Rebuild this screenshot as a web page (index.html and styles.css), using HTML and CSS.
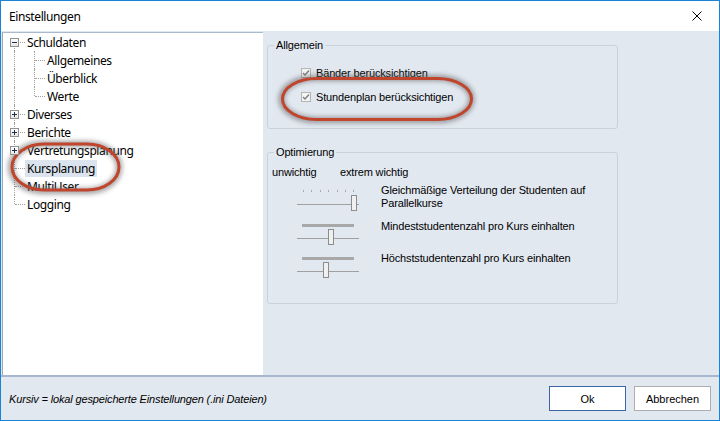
FILE: index.html
```html
<!DOCTYPE html>
<html lang="de">
<head>
  <meta charset="UTF-8">
  <title>Einstellungen</title>
  <link rel="stylesheet" href="styles.css">
</head>
<body>
  <div class="window">
    <!-- Titelleiste -->
    <div class="titlebar">
      <span class="title">Einstellungen</span>
      <svg class="close" width="10" height="10" viewBox="0 0 10 10">
        <path d="M0.5 0.5 L9.5 9.5 M9.5 0.5 L0.5 9.5" stroke="#000" stroke-width="1" fill="none"/>
      </svg>
    </div>

    <div class="main">
      <!-- Baum links -->
      <div class="tree">
        <div class="row"><span class="branch first"><span class="expander minus"></span></span><span class="label">Schuldaten</span></div>
        <div class="row"><span class="branch pipe"></span><span class="branch tee"></span><span class="label">Allgemeines</span></div>
        <div class="row"><span class="branch pipe"></span><span class="branch tee"></span><span class="label">Überblick</span></div>
        <div class="row"><span class="branch pipe"></span><span class="branch elbow"></span><span class="label">Werte</span></div>
        <div class="row"><span class="branch tee"><span class="expander plus"></span></span><span class="label">Diverses</span></div>
        <div class="row"><span class="branch tee"><span class="expander plus"></span></span><span class="label">Berichte</span></div>
        <div class="row"><span class="branch tee"><span class="expander plus"></span></span><span class="label">Vertretungsplanung</span></div>
        <div class="row"><span class="branch tee"></span><span class="label selected">Kursplanung</span></div>
        <div class="row"><span class="branch tee"></span><span class="label">MultiUser</span></div>
        <div class="row"><span class="branch elbow"></span><span class="label">Logging</span></div>
      </div>

      <!-- Einstellungen rechts -->
      <div class="settings">
        <fieldset class="group group-general">
          <legend>Allgemein</legend>
          <label class="check first-check">
            <svg width="10" height="10" viewBox="0 0 10 10"><rect x="0.5" y="0.5" width="9" height="9" fill="#f4f4f4" stroke="#b4b4b4"/><path d="M2 5 L4 7 L8 2.5" stroke="#808080" stroke-width="1.4" fill="none"/></svg>
            Bänder berücksichtigen
          </label>
          <label class="check">
            <svg width="10" height="10" viewBox="0 0 10 10"><rect x="0.5" y="0.5" width="9" height="9" fill="#f4f4f4" stroke="#b4b4b4"/><path d="M2 5 L4 7 L8 2.5" stroke="#808080" stroke-width="1.4" fill="none"/></svg>
            Stundenplan berücksichtigen
          </label>
        </fieldset>

        <fieldset class="group group-opt">
          <legend>Optimierung</legend>
          <div class="scale"><span class="scale-lo">unwichtig</span><span>extrem wichtig</span></div>

          <div class="slider-row tall">
            <svg class="slider" width="64" height="24" viewBox="0 0 64 24">
              <path d="M6.5 2 V4 M14.5 2 V4 M23.5 2 V4 M31.5 2 V4 M40.5 2 V4 M48.5 2 V4 M56.5 2 V4" stroke="#a8a8a8"/>
              <path d="M0 16.5 H62" stroke="#a0a0a0"/>
              <rect x="54.5" y="7.5" width="5" height="15" fill="#f0f0f0" stroke="#8c8c8c"/>
            </svg>
            <span class="slider-label">Gleichmäßige Verteilung der Studenten auf<br>Parallelkurse</span>
          </div>

          <div class="slider-row">
            <svg class="slider" width="64" height="24" viewBox="0 0 64 24">
              <rect x="5" y="0" width="52" height="3" fill="#a8a8a8"/>
              <path d="M0 14.5 H62" stroke="#a0a0a0"/>
              <rect x="31.5" y="5.5" width="5" height="15" fill="#f0f0f0" stroke="#8c8c8c"/>
            </svg>
            <span class="slider-label">Mindeststudentenzahl pro Kurs einhalten</span>
          </div>

          <div class="slider-row">
            <svg class="slider" width="64" height="24" viewBox="0 0 64 24">
              <rect x="5" y="1" width="52" height="3" fill="#a8a8a8"/>
              <path d="M0 15.5 H62" stroke="#a0a0a0"/>
              <rect x="26.5" y="6.5" width="5" height="15" fill="#f0f0f0" stroke="#8c8c8c"/>
            </svg>
            <span class="slider-label">Höchststudentenzahl pro Kurs einhalten</span>
          </div>
        </fieldset>
      </div>
    </div>

    <!-- Fußleiste -->
    <div class="footer">
      <span class="hint">Kursiv = lokal gespeicherte Einstellungen (.ini Dateien)</span>
      <div class="buttons">
        <button class="btn btn-default">Ok</button>
        <button class="btn">Abbrechen</button>
      </div>
    </div>

    <!-- rote Markierungen über dem Screenshot -->
    <svg class="marks" width="720" height="421" viewBox="0 0 720 421">
      <defs>
        <filter id="soft" x="-20%" y="-40%" width="140%" height="180%">
          <feGaussianBlur stdDeviation="2.4"/>
        </filter>
      </defs>
      <rect x="281.5" y="78" width="190" height="42" rx="34" ry="21" fill="none" stroke="#5e5e5e" stroke-width="6" opacity="0.6" filter="url(#soft)"/>
      <rect x="282.5" y="78.5" width="189" height="41" rx="34" ry="20.5" fill="none" stroke="#c0452c" stroke-width="3"/>
      <rect x="11" y="144" width="108" height="47" rx="32" ry="23" fill="none" stroke="#5e5e5e" stroke-width="6" opacity="0.6" filter="url(#soft)"/>
      <rect x="12" y="144" width="107" height="46" rx="32" ry="23" fill="none" stroke="#c0452c" stroke-width="3"/>
    </svg>
  </div>
</body>
</html>
```

FILE: styles.css
```css
html, body {
  margin: 0;
  padding: 0;
  background: #ffffff;
}

.window {
  position: relative;
  width: 720px;
  height: 421px;
  box-sizing: border-box;
  border: 1px solid #1883d7;
  background: #e2e8f0;
  display: flex;
  flex-direction: column;
  overflow: hidden;
  font-family: "Liberation Sans", Arial, sans-serif;
  font-size: 11px;
  letter-spacing: -0.15px;
  color: #000000;
}

/* Titelleiste */
.titlebar {
  height: 30px;
  flex: none;
  background: #ffffff;
  display: flex;
  align-items: center;
  justify-content: space-between;
  padding: 0 17px 0 8px;
}
.title {
  font-family: "Noto Sans", "Open Sans", sans-serif;
  font-size: 12px;
  letter-spacing: -0.4px;
}

.main {
  height: 344px;
  flex: none;
  display: flex;
}

/* Baum */
.tree {
  width: 259px;
  margin: 1px 0 0 1px;
  background: #ffffff;
  border-top: 1px solid #abb9cd;
  border-left: 1px solid #a3a8ae;
  padding-left: 1px;
  font-family: "Noto Sans", "Open Sans", sans-serif;
  font-size: 12px;
  letter-spacing: -0.4px;
}
.row {
  display: flex;
  align-items: center;
  height: 18px;
}
.branch {
  position: relative;
  width: 20px;
  height: 18px;
  flex: none;
}
.branch::before,
.branch::after {
  content: "";
  position: absolute;
}
.pipe::before,
.tee::before {
  left: 10px;
  top: 0;
  bottom: 0;
  border-left: 1px dotted #a0a0a0;
}
.first::before {
  left: 10px;
  top: 9px;
  bottom: 0;
  border-left: 1px dotted #a0a0a0;
}
.elbow::before {
  left: 10px;
  top: 0;
  height: 9px;
  border-left: 1px dotted #a0a0a0;
}
.tee::after,
.elbow::after,
.first::after {
  left: 11px;
  top: 9px;
  width: 10px;
  border-top: 1px dotted #a0a0a0;
}
.expander {
  position: absolute;
  left: 6px;
  top: 5px;
  width: 7px;
  height: 7px;
  border: 1px solid #919191;
  background: linear-gradient(#ffffff, #e6e6e6);
  z-index: 1;
}
.expander::before,
.expander::after {
  content: "";
  position: absolute;
  background: #1f2f4d;
}
.expander::before {
  left: 1px;
  top: 3px;
  width: 5px;
  height: 1px;
}
.plus::after {
  left: 3px;
  top: 1px;
  width: 1px;
  height: 5px;
}
.label {
  margin-left: 1px;
  padding: 0 2px;
  line-height: 17px;
  white-space: nowrap;
}
.label.selected {
  background: #dbe4ee;
}

/* Einstellungen rechts */
.settings {
  flex: 1;
  padding: 8px 0 0 4px;
}
.group {
  width: 351px;
  box-sizing: border-box;
  margin: 0;
  padding: 0;
  border: 1px solid #c9d1da;
  border-radius: 3px;
}
.group legend {
  margin-left: 6px;
  padding: 0 2px;
  line-height: 13px;
}
.group-general {
  padding-bottom: 25px;
}
.check {
  display: flex;
  align-items: center;
  height: 13px;
  margin: 11px 0 0 33px;
}
.check.first-check {
  margin-top: 14px;
}
.check svg {
  margin-right: 5px;
}

.group-opt {
  margin-top: 17px;
  padding-bottom: 19px;
}
.scale {
  margin: 7px 0 0 4px;
  line-height: 13px;
}
.scale-lo {
  display: inline-block;
  width: 68px;
}
.slider-row {
  display: flex;
  align-items: flex-start;
  height: 32px;
}
.slider-row.tall {
  height: 36px;
  margin-top: 5px;
}
.slider {
  flex: none;
  margin: 4px 0 0 29px;
}
.slider-label {
  margin-left: 20px;
  line-height: 13px;
}

/* Fußleiste */
.footer {
  flex: 1;
  border-top: 2px solid #a7b6cd;
  display: flex;
  align-items: center;
  justify-content: space-between;
  padding: 0 8px 0 8px;
}
.hint {
  font-style: italic;
}
.buttons {
  display: flex;
  gap: 8px;
}
.btn {
  width: 77px;
  height: 25px;
  background: #ffffff;
  border: 1px solid #adadad;
  font-family: "Liberation Sans", Arial, sans-serif;
  font-size: 11px;
  color: #000000;
  padding: 0;
}
.btn-default {
  border-color: #3c65a8;
}

.marks {
  position: absolute;
  top: -1px;
  left: -1px;
  pointer-events: none;
}
```
